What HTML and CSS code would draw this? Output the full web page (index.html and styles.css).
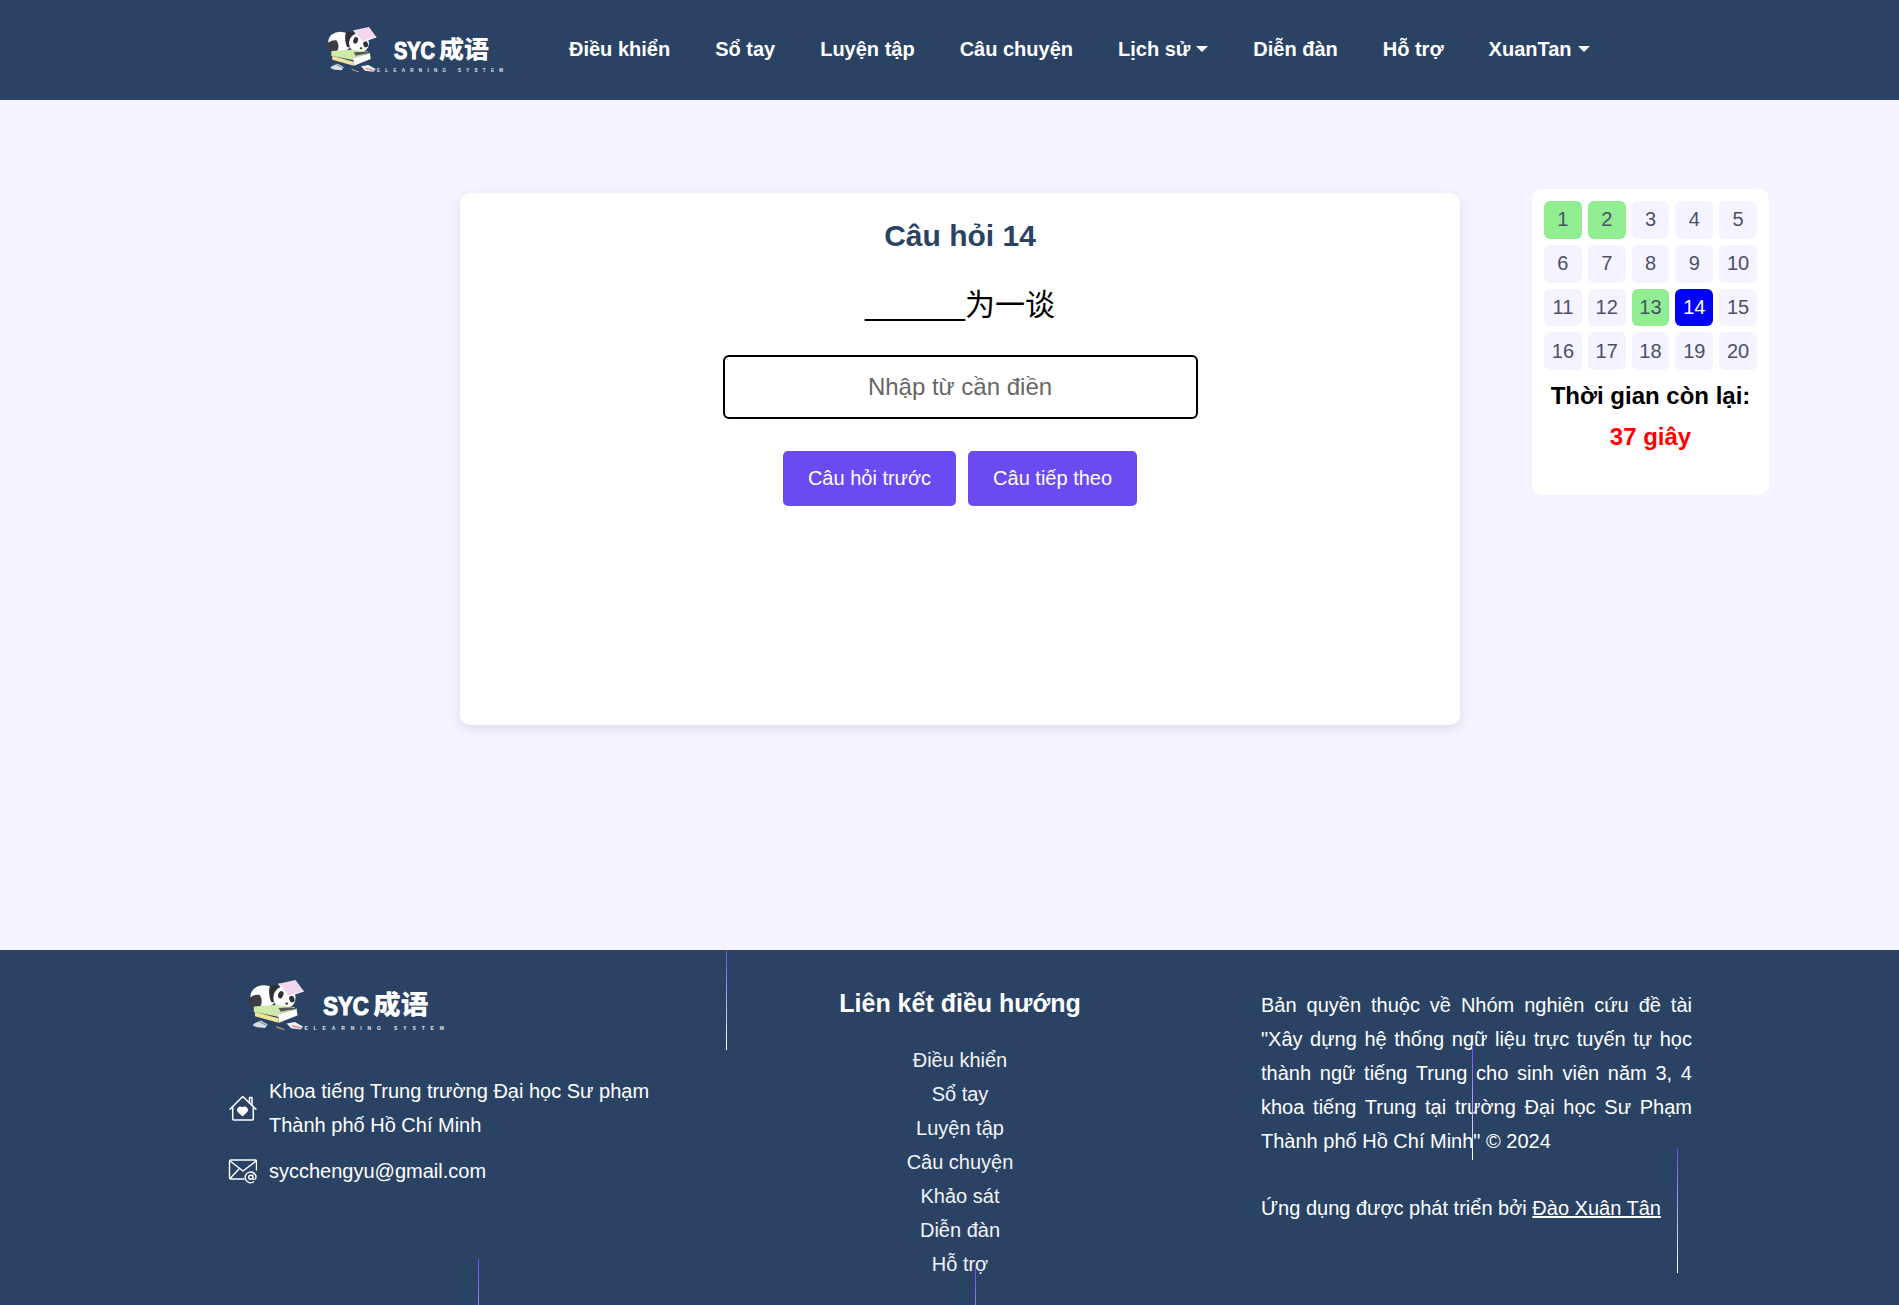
FILE: index.html
```html
<!DOCTYPE html>
<html lang="vi">
<head>
<meta charset="utf-8">
<title>SYC 成语</title>
<link rel="stylesheet" href="styles.css">
</head>
<body>
<header class="nav">
  <a class="brand" href="#">
    <svg class="logo-nav" viewBox="0 0 190 65">
      <g transform="translate(5 5) scale(.3333)">
        <path d="M20 130l18-8 18 10-6 10-22-2-12-5z" fill="#d8dde6"/>
        <path d="M32 124l20 10" stroke="#7d8aa0" stroke-width="3" fill="none"/>
        <path d="M80 139l22 8" stroke="#c9a060" stroke-width="3" fill="none"/>
        <path d="M108 130l22-4 22 12-6 8-26-3z" fill="#eef0f4"/>
        <path d="M122 136l24 6" stroke="#d7889a" stroke-width="4" fill="none"/>
        <ellipse cx="46" cy="56" rx="36" ry="30" fill="#fff"/>
        <path d="M2 74c3-14 16-24 32-22 8 8 8 26 2 32-14 2-30 0-34-10z" fill="#3c3c44"/>
        <path d="M62 30c9-5 20-5 26 0 2 16-2 32-8 44l-14-2c-6-14-7-30-4-42z" fill="#2f2f38"/>
        <circle cx="102" cy="60" r="30" fill="#fff"/>
        <path d="M22 98l64 18v12l-64-18z" fill="#f1e39a"/>
        <path d="M19 84l60-4 52 6-44 26-68-14z" fill="#cfeaa8"/>
        <path d="M85 104l50-14 2 18-50 20z" fill="#fdfdfb"/>
        <path d="M85 104l50-14" stroke="#9bc27a" stroke-width="2" fill="none"/>
        <ellipse cx="92" cy="52" rx="7" ry="10" fill="#2f2f38" transform="rotate(20 92 52)"/>
        <ellipse cx="122" cy="64" rx="7" ry="9" fill="#2f2f38" transform="rotate(-20 122 64)"/>
        <ellipse cx="108" cy="76" rx="4" ry="3" fill="#2f2f38"/>
        <path d="M86 88l36-2 8 4-38 8z" fill="#55555e"/>
        <path d="M86 22l46-10 22 30-42 14z" fill="#f3d6ec"/>
        <path d="M86 22l26 34 42-14" fill="none" stroke="#fff" stroke-width="3"/>
      </g>
      <text class="logo-syc" x="74" y="41" textLength="41" lengthAdjust="spacingAndGlyphs">SYC</text>
      <text class="logo-cn" x="119" y="40" textLength="50" lengthAdjust="spacingAndGlyphs">成语</text>
      <text class="logo-sub" x="57" y="54" textLength="126">ELEARNING SYSTEM</text>
    </svg>
  </a>
  <nav class="nav-links">
    <a href="#">Điều khiển</a>
    <a href="#">Sổ tay</a>
    <a href="#">Luyện tập</a>
    <a href="#">Câu chuyện</a>
    <a class="drop" href="#">Lịch sử</a>
    <a href="#">Diễn đàn</a>
    <a href="#">Hỗ trợ</a>
    <a class="drop" href="#">XuanTan</a>
  </nav>
</header>

<main class="main">
  <section class="card">
    <h1 class="q-title">Câu hỏi 14</h1>
    <p class="q-text">______为一谈</p>
    <input class="q-input" type="text" placeholder="Nhập từ cần điền">
    <div class="q-actions">
      <button class="btn" type="button">Câu hỏi trước</button>
      <button class="btn" type="button">Câu tiếp theo</button>
    </div>
  </section>
  <aside class="panel">
    <div class="grid">
      <span class="cell done">1</span><span class="cell done">2</span><span class="cell">3</span><span class="cell">4</span><span class="cell">5</span>
      <span class="cell">6</span><span class="cell">7</span><span class="cell">8</span><span class="cell">9</span><span class="cell">10</span>
      <span class="cell">11</span><span class="cell">12</span><span class="cell done">13</span><span class="cell current">14</span><span class="cell">15</span>
      <span class="cell">16</span><span class="cell">17</span><span class="cell">18</span><span class="cell">19</span><span class="cell">20</span>
    </div>
    <p class="time-label">Thời gian còn lại:</p>
    <p class="time-value">37 giây</p>
  </aside>
</main>

<footer class="footer">
  <i class="line line-a"></i><i class="line line-b"></i><i class="line line-c"></i><i class="line line-d"></i><i class="line line-e"></i>
  <div class="col col-info">
    <svg class="logo-foot" viewBox="0 0 190 65">
      <g transform="translate(5 5) scale(.3333)">
        <path d="M20 130l18-8 18 10-6 10-22-2-12-5z" fill="#d8dde6"/>
        <path d="M32 124l20 10" stroke="#7d8aa0" stroke-width="3" fill="none"/>
        <path d="M80 139l22 8" stroke="#c9a060" stroke-width="3" fill="none"/>
        <path d="M108 130l22-4 22 12-6 8-26-3z" fill="#eef0f4"/>
        <path d="M122 136l24 6" stroke="#d7889a" stroke-width="4" fill="none"/>
        <ellipse cx="46" cy="56" rx="36" ry="30" fill="#fff"/>
        <path d="M2 74c3-14 16-24 32-22 8 8 8 26 2 32-14 2-30 0-34-10z" fill="#3c3c44"/>
        <path d="M62 30c9-5 20-5 26 0 2 16-2 32-8 44l-14-2c-6-14-7-30-4-42z" fill="#2f2f38"/>
        <circle cx="102" cy="60" r="30" fill="#fff"/>
        <path d="M22 98l64 18v12l-64-18z" fill="#f1e39a"/>
        <path d="M19 84l60-4 52 6-44 26-68-14z" fill="#cfeaa8"/>
        <path d="M85 104l50-14 2 18-50 20z" fill="#fdfdfb"/>
        <path d="M85 104l50-14" stroke="#9bc27a" stroke-width="2" fill="none"/>
        <ellipse cx="92" cy="52" rx="7" ry="10" fill="#2f2f38" transform="rotate(20 92 52)"/>
        <ellipse cx="122" cy="64" rx="7" ry="9" fill="#2f2f38" transform="rotate(-20 122 64)"/>
        <ellipse cx="108" cy="76" rx="4" ry="3" fill="#2f2f38"/>
        <path d="M86 88l36-2 8 4-38 8z" fill="#55555e"/>
        <path d="M86 22l46-10 22 30-42 14z" fill="#f3d6ec"/>
        <path d="M86 22l26 34 42-14" fill="none" stroke="#fff" stroke-width="3"/>
      </g>
      <text class="logo-syc" x="74" y="41" textLength="41" lengthAdjust="spacingAndGlyphs">SYC</text>
      <text class="logo-cn" x="119" y="40" textLength="50" lengthAdjust="spacingAndGlyphs">成语</text>
      <text class="logo-sub" x="57" y="54" textLength="126">ELEARNING SYSTEM</text>
    </svg>
    <div class="contact contact-addr">
      <svg class="icon" viewBox="0 0 29 26" fill="none" stroke="#fff" stroke-width="1.500" stroke-linejoin="round" stroke-linecap="round">
        <path d="M2 14.300L14.700 1.500 28 14.300"/>
        <path d="M4.700 11.500v12.300c0 .7.500 1.200 1.200 1.200h18.200c.7 0 1.200-.5 1.200-1.200V11.500"/>
        <path d="M21.500 8V2.500H24v8"/>
        <path d="M14.500 20.500l-4-3.800c-2.500-2.700 2-6.400 4-3 2-3.400 6.500.3 4 3z" fill="#fff"/>
      </svg>
      <span>Khoa tiếng Trung trường Đại học Sư phạm<br>Thành phố Hồ Chí Minh</span>
    </div>
    <div class="contact">
      <svg class="icon" viewBox="0 0 29 26" fill="none" stroke="#fff" stroke-width="1.400" stroke-linejoin="round" stroke-linecap="round">
        <path d="M16 21H2.800c-.7 0-1.300-.6-1.300-1.300V3.300C1.500 2.600 2.100 2 2.800 2h24.400c.7 0 1.300.6 1.300 1.300V12"/>
        <path d="M2 3l13 10L28 3"/>
        <path d="M2 20.500l9-9.500"/>
        <circle cx="22.700" cy="19.300" r="2"/>
        <path d="M24.700 17v3.200c0 1.800 3.300 1.500 3.300-.9a5.400 5.400 0 1 0-2.300 4.500"/>
      </svg>
      <span>sycchengyu@gmail.com</span>
    </div>
  </div>
  <div class="col col-links">
    <h2 class="foot-title">Liên kết điều hướng</h2>
    <a href="#">Điều khiển</a>
    <a href="#">Sổ tay</a>
    <a href="#">Luyện tập</a>
    <a href="#">Câu chuyện</a>
    <a href="#">Khảo sát</a>
    <a href="#">Diễn đàn</a>
    <a href="#">Hỗ trợ</a>
  </div>
  <div class="col col-copy">
    <p class="copy-text">Bản quyền thuộc về Nhóm nghiên cứu đề tài "Xây dựng hệ thống ngữ liệu trực tuyến tự học thành ngữ tiếng Trung cho sinh viên năm 3, 4 khoa tiếng Trung tại trường Đại học Sư Phạm Thành phố Hồ Chí Minh" © 2024</p>
    <p class="copy-dev">Ứng dụng được phát triển bởi <a href="#">Đào Xuân Tân</a></p>
  </div>
</footer>
</body>
</html>
```
FILE: styles.css
```css
* { box-sizing: border-box; }
html, body { margin: 0; padding: 0; }
body {
  font-family: "Liberation Sans", Arial, sans-serif;
  background: #f5f3ff;
  color: #000;
  width: 1899px;
  overflow-x: hidden;
}
a { color: inherit; text-decoration: none; }

.logo-syc { font: 900 23px "Liberation Sans", sans-serif; fill: #fff; stroke: #fff; stroke-width: 1.1px; }
.logo-cn { font: 900 24px "Noto Sans CJK SC", sans-serif; fill: #fff; }
.logo-sub { font: 700 4.500px "Liberation Sans", sans-serif; fill: #e6e8ee; }

.nav {
  height: 100px;
  background: #2a4365;
  display: flex;
  align-items: center;
  padding-left: 320px;
}
.brand { display: flex; }
.logo-nav { width: 190px; height: 65px; }
.nav-links {
  display: flex;
  gap: 45px;
  margin-left: 59px;
  padding-bottom: 2px;
  font-size: 20px;
  font-weight: 700;
  color: #fff;
}
.drop::after {
  content: "";
  display: inline-block;
  margin-left: 6px;
  vertical-align: 4px;
  border-top: 6px solid #fff;
  border-left: 6px solid transparent;
  border-right: 6px solid transparent;
}

.main {
  height: 850px;
  display: flex;
  align-items: flex-start;
  gap: 72px;
  padding-left: 460px;
}
.card {
  width: 1000px;
  height: 532px;
  margin-top: 93px;
  padding-top: 25px;
  background: #fff;
  border-radius: 10px;
  box-shadow: 0 4px 12px rgba(42, 67, 101, .12);
  display: flex;
  flex-direction: column;
  align-items: center;
}
.q-title {
  margin: 0;
  font-size: 30px;
  line-height: 36px;
  font-weight: 700;
  color: #2a4365;
}
.q-text {
  margin: 29px 0 0;
  font-family: "Liberation Sans", "Noto Sans CJK SC", sans-serif;
  font-size: 30px;
  line-height: 44px;
}
.q-input {
  width: 475px;
  height: 64px;
  margin-top: 28px;
  border: 2px solid #000;
  border-radius: 6px;
  background: #fff;
  outline: none;
  text-align: center;
  font: 24px "Liberation Sans", sans-serif;
}
.q-input::placeholder { color: #666; opacity: 1; }
.q-actions { display: flex; gap: 12px; margin-top: 32px; }
.btn {
  height: 55px;
  padding: 0 25px;
  border: 0;
  border-radius: 5px;
  background: #6c4af2;
  color: #fff;
  font: 20px "Liberation Sans", sans-serif;
}

.panel {
  width: 237px;
  height: 306px;
  margin-top: 89px;
  padding: 12px;
  background: #fff;
  border-radius: 10px;
}
.grid {
  display: grid;
  grid-template-columns: repeat(5, 1fr);
  gap: 6px;
}
.cell {
  aspect-ratio: 1;
  display: flex;
  align-items: center;
  justify-content: center;
  background: #f5f3ff;
  border-radius: 6px;
  color: #4a5068;
  font-size: 20px;
}
.cell.done { background: #90ee90; }
.cell.current { background: #0000ff; color: #fff; }
.time-label, .time-value {
  margin: 0;
  text-align: center;
  font-weight: 700;
  font-size: 24px;
  line-height: 41px;
}
.time-label { margin-top: 5px; }
.time-value { color: #f00; }

.footer {
  position: relative;
  height: 355px;
  overflow: hidden;
  background: #2a4365;
  color: #fff;
  display: grid;
  grid-template-columns: repeat(3, 431px);
  column-gap: 85.500px;
  padding-left: 228px;
  font-size: 20px;
  line-height: 34px;
}
.line {
  position: absolute;
  width: 1px;
  background: linear-gradient(to bottom, #6c4af2, #fff);
}
.line-a { left: 726px; top: 0; height: 100px; }
.line-b { left: 478px; top: 309px; height: 150px; }
.line-c { left: 1472px; top: 95px; height: 115px; }
.line-d { left: 1677px; top: 198px; height: 125px; }
.line-e { left: 975px; top: 315px; height: 150px; }

.col-info { padding-top: 20px; }
.logo-foot { display: block; width: 211px; height: 72px; margin-left: 13px; }
.contact { display: flex; align-items: center; gap: 12px; margin-top: 12px; }
.contact-addr { margin-top: 32px; }
.icon { flex: none; width: 29px; height: 26px; }

.col-links {
  padding-top: 38px;
  display: flex;
  flex-direction: column;
  align-items: center;
  color: #f3f3f7;
}
.foot-title {
  margin: 0 0 25px;
  font-size: 25px;
  line-height: 30px;
  font-weight: 700;
  color: #fff;
}
.col-copy { padding-top: 38px; }
.copy-text { margin: 0 0 33px; text-align: justify; }
.copy-dev { margin: 0; }
.copy-dev a { text-decoration: underline; }
```
